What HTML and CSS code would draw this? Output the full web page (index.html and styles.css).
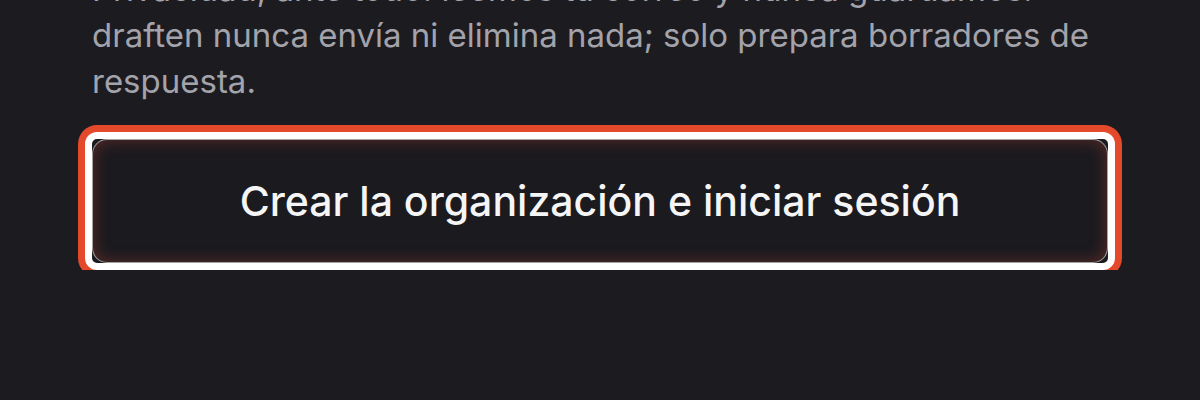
FILE: index.html
```html
<!DOCTYPE html>
<html lang="es">
<head>
<meta charset="utf-8">
<title>Crear organización</title>
<link rel="stylesheet" href="styles.css">
</head>
<body>
<main class="panel">
  <p class="note">Privacidad, ante todo: leemos tu correo y nunca guardamos.<br>draften nunca envía ni elimina nada; solo prepara borradores de respuesta.</p>
  <div class="ring">
    <button class="submit" type="button">Crear la organización e iniciar sesión</button>
  </div>
</main>
</body>
</html>
```

FILE: styles.css
```css
html, body {
  margin: 0;
  padding: 0;
  background: #1c1b20;
}

.panel {
  padding: 0 92px;
  font-family: Inter, "Noto Sans", sans-serif;
}

.note {
  margin: -34px 0 28px;
  font-size: 33px;
  line-height: 46px;
  color: #a3a3ab;
}

.ring {
  margin: 0 -7px;
  border: 7px solid #ffffff;
  border-radius: 12px;
  box-shadow: 0 0 0 7px #e4492c;
  background: #1c1b20;
}

.submit {
  display: block;
  width: 100%;
  height: 124px;
  margin: 0;
  border: 1.5px solid rgba(255, 255, 255, 0.6);
  border-radius: 15px;
  background: #1b1a1f;
  box-shadow: inset 0 0 16px rgba(190, 70, 50, 0.4);
  color: #f5f5f6;
  font-family: Inter, "Noto Sans", sans-serif;
  font-size: 41px;
  font-weight: 500;
  cursor: pointer;
}
```
